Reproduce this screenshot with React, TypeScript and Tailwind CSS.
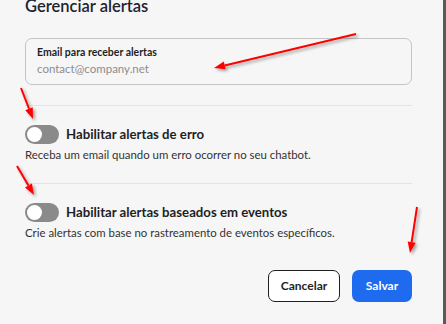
import React from 'react';

function Toggle() {
  return (
    <div className="w-[34px] h-[19px] rounded-full bg-[#8a8a8a] flex items-center px-[2px] shrink-0">
      <div className="w-[15px] h-[15px] rounded-full bg-white" />
    </div>
  );
}

function Arrow({ x1, y1, x2, y2 }: { x1: number; y1: number; x2: number; y2: number }) {
  const ang = Math.atan2(y2 - y1, x2 - x1);
  const len = 11;
  const w = 4;
  const bx = x2 - len * Math.cos(ang);
  const by = y2 - len * Math.sin(ang);
  const px = -Math.sin(ang) * w;
  const py = Math.cos(ang) * w;
  return (
    <g>
      <line x1={x1} y1={y1} x2={bx} y2={by} stroke="#ff0000" strokeWidth={2} />
      <polygon points={`${x2},${y2} ${bx + px},${by + py} ${bx - px},${by - py}`} fill="#ff0000" />
    </g>
  );
}

export default function App() {
  return (
    <div className="relative w-[446px] h-[324px] overflow-hidden bg-[#f6f6f6] font-['Lato','Noto_Sans',sans-serif] text-[#1f1f1f]">
      <div className="absolute right-0 top-0 h-full w-[3px] bg-[#5a5a5a]" />

      <div className="flex flex-col px-[25px] w-[437px] -mt-[3px]">
        <h1 className="text-[16.5px] font-semibold leading-[19px] text-[#1d2330]">Gerenciar alertas</h1>

        <div className="mt-[22px] h-[47px] border border-[#c4c4c4] rounded-[7px] px-[11px] pt-[5px]">
          <div className="text-[10.5px] font-bold leading-[16px] text-[#1f1f1f]">Email para receber alertas</div>
          <div className="text-[11.5px] leading-[18px] text-[#8d8d8d]">contact@company.net</div>
        </div>

        <div className="mt-[20px] h-px bg-[#e3e3e3]" />

        <div className="mt-[19px] flex items-center gap-[7px]">
          <Toggle />
          <span className="text-[13.2px] font-bold leading-[19px]">Habilitar alertas de erro</span>
        </div>
        <p className="mt-[3px] text-[11.4px] leading-[16px] text-[#333]">Receba um email quando um erro ocorrer no seu chatbot.</p>

        <div className="mt-[20px] h-px bg-[#e3e3e3]" />

        <div className="mt-[19px] flex items-center gap-[7px]">
          <Toggle />
          <span className="text-[13.2px] font-bold leading-[19px]">Habilitar alertas baseados em eventos</span>
        </div>
        <p className="mt-[3px] text-[11.4px] leading-[16px] text-[#333]">Crie alertas com base no rastreamento de eventos específicos.</p>

        <div className="mt-[29px] flex justify-end gap-[12px]">
          <button className="w-[72px] h-[32px] rounded-[7px] border border-[#1f1f1f] bg-white text-[12px] font-bold text-[#1f1f1f]">Cancelar</button>
          <button className="w-[60px] h-[32px] rounded-[7px] bg-[#1f6bef] text-[12px] font-bold text-white">Salvar</button>
        </div>
      </div>

      <svg className="absolute inset-0 pointer-events-none" width="446" height="324">
        <defs>
          <filter id="sh" x="-20%" y="-20%" width="140%" height="140%">
            <feDropShadow dx="2" dy="2" stdDeviation="1.5" floodColor="#000" floodOpacity="0.35" />
          </filter>
        </defs>
        <g filter="url(#sh)">
          <Arrow x1={356} y1={34} x2={214} y2={68} />
          <Arrow x1={21} y1={88} x2={33} y2={119} />
          <Arrow x1={17} y1={166} x2={34} y2={195} />
          <Arrow x1={417} y1={207} x2={410} y2={253} />
        </g>
      </svg>
    </div>
  );
}
